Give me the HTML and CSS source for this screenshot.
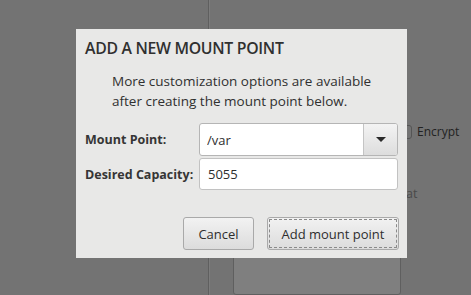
FILE: index.html
```html
<!DOCTYPE html>
<html lang="en">
  <head>
    <meta charset="UTF-8" />
    <title>Add a new mount point</title>
    <link rel="stylesheet" href="styles.css">
  </head>
  <body>
    <div class="screen">
      <div class="side-pane"></div>
      <div class="main-pane">
        <div class="encrypt-row">
          <span class="check"></span><span>Encrypt</span>
        </div>
        <p class="hint">at</p>
        <div class="empty-box"></div>
      </div>

      <div class="dialog">
        <h3>ADD A NEW MOUNT POINT</h3>
        <p class="info">
          More customization options are available<br />
          after creating the mount point below.
        </p>
        <div class="form-grid">
          <label for="mount">Mount Point:</label>
          <div class="combo">
            <input id="mount" type="text" value="/var" />
            <span class="combo-btn"><span class="arrow"></span></span>
          </div>
          <label for="size">Desired Capacity:</label>
          <input id="size" class="entry" type="text" value="5055" />
        </div>
        <div class="btn-row">
          <button class="btn cancel-btn">Cancel</button>
          <button class="btn add-btn">Add mount point</button>
        </div>
      </div>
    </div>
  </body>
</html>
```

FILE: styles.css
```css
body {
  margin: 0;
  background-color: #737373;
  font-family: "Open Sans", "Noto Sans", sans-serif;
}
.screen {
  position: relative;
  display: flex;
  width: 471px;
  height: 295px;
  overflow: hidden;
}
.side-pane {
  width: 208px;
  border-right: 1px solid #5f5f5f;
}
.main-pane {
  flex: 1;
  border-left: 1px solid #7c7c7c;
  padding-left: 189px;
  padding-top: 124px;
  display: flex;
  flex-direction: column;
}
.encrypt-row {
  display: flex;
  align-items: center;
  gap: 5px;
  color: #222;
  font-size: 12px;
  height: 15px;
}
.check {
  width: 13px;
  height: 14px;
  border: 1px solid #555;
  border-radius: 3px;
  box-sizing: border-box;
}
.hint {
  margin: 46px 0 0 7px;
  font-size: 12.5px;
  color: #4a4a4a;
}
.empty-box {
  margin: 52px 0 0 -166px;
  width: 166px;
  height: 40px;
  background-color: #7f7f7f;
  border: 1px solid #5f5f5f;
  border-radius: 3px;
}
.dialog {
  position: absolute;
  left: 76px;
  top: 29px;
  width: 331px;
  height: 229px;
  box-sizing: border-box;
  padding: 0 8px 0 9px;
  background-color: #e8e8e7;
  color: #303030;
  display: flex;
  flex-direction: column;
}
h3 {
  margin: 9px 0 0 0;
  font-size: 15.8px;
  font-weight: 600;
  letter-spacing: -0.3px;
  line-height: 20px;
}
.info {
  margin: 13px 0 0 27px;
  font-size: 13.5px;
  line-height: 20px;
}
.form-grid {
  margin-top: 12px;
  display: grid;
  grid-template-columns: 114px 199px;
  grid-template-rows: 33px 32px;
  row-gap: 2px;
  align-items: center;
}
label {
  font-size: 12.5px;
  font-weight: 700;
  color: #353535;
}
.combo {
  display: flex;
  height: 33px;
  border: 1px solid #b5b5b5;
  border-radius: 3px;
  box-sizing: border-box;
  background-color: #fff;
  overflow: hidden;
}
input {
  font-family: inherit;
  font-size: 13px;
  color: #2e2e2e;
  border: none;
  outline: none;
  background: transparent;
}
.combo input {
  flex: 1;
  padding: 0 0 0 7px;
  min-width: 0;
}
.combo-btn {
  width: 33px;
  display: flex;
  align-items: center;
  justify-content: center;
  border-left: 1px solid #c4c4c4;
  background: linear-gradient(#f3f3f3, #dddddd);
}
.arrow {
  width: 0;
  height: 0;
  border-left: 5px solid transparent;
  border-right: 5px solid transparent;
  border-top: 5px solid #2a2a2a;
}
.entry {
  height: 32px;
  box-sizing: border-box;
  padding: 0 0 0 8px;
  border: 1px solid #c2c2c2;
  border-radius: 3px;
  background-color: #fff;
}
.btn-row {
  display: flex;
  justify-content: flex-end;
  gap: 13px;
  margin-top: 27px;
}
.btn {
  height: 33px;
  font-family: inherit;
  font-size: 13px;
  color: #2e2e2e;
  border: 1px solid #a9a9a9;
  border-radius: 3px;
  background: linear-gradient(#f2f2f2, #dcdcdc);
}
.cancel-btn {
  width: 71px;
}
.add-btn {
  width: 132px;
  outline: 1px dashed #8a8a8a;
  outline-offset: -3px;
}
```
